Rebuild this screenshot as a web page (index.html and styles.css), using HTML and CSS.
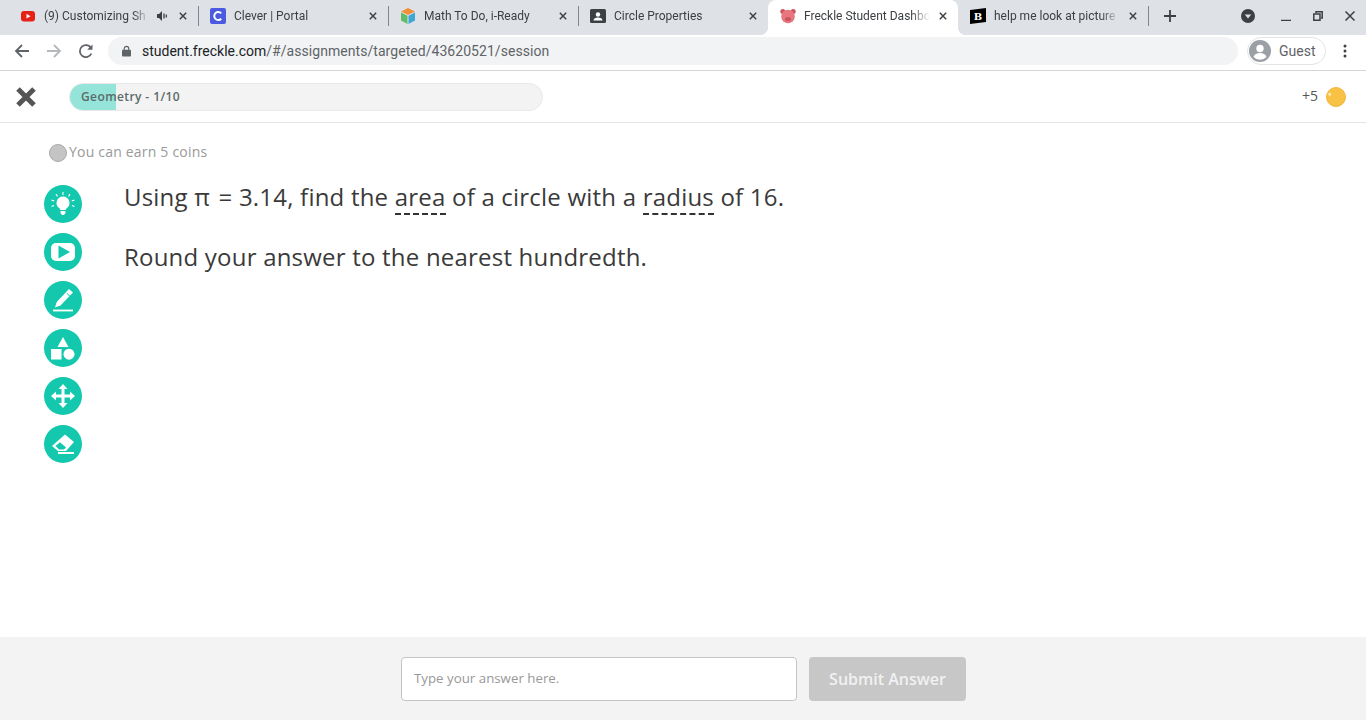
FILE: index.html
```html
<!DOCTYPE html>
<html lang="en">
<head>
    <meta charset="UTF-8">
    <meta name="viewport" content="width=device-width, initial-scale=1.0">
    <title>Freckle Student Dashboard</title>
    <link rel="stylesheet" href="styles.css">
</head>
<body>
    <!-- Browser tabs -->
    <div class="tabstrip">
        <div class="tab sep">
            <svg class="favicon" viewBox="0 0 16 16"><rect x="1" y="3" width="14" height="10.5" rx="3" fill="#e62117"/><path d="M6.5 5.800v4.800l4-2.400z" fill="#fff"/></svg>
            <span class="tab-title">(9) Customizing Sh</span>
            <svg class="audio" viewBox="0 0 10 12"><path d="M0 4h2l3-3v10L2 8H0z" fill="#3c4043"/><path d="M7 3.500v5M9.300 4.500v3" stroke="#3c4043" stroke-width="1.300"/></svg>
            <svg class="tab-close" viewBox="0 0 10 10"><path d="M1 1l8 8M9 1l-8 8"/></svg>
        </div>
        <div class="tab sep">
            <svg class="favicon" viewBox="0 0 16 16"><rect width="16" height="16" rx="2" fill="#4a5be0"/><path d="M11.200 5.300a4 4 0 1 0 0 5.400" fill="none" stroke="#fff" stroke-width="2"/></svg>
            <span class="tab-title">Clever | Portal</span>
            <svg class="tab-close" viewBox="0 0 10 10"><path d="M1 1l8 8M9 1l-8 8"/></svg>
        </div>
        <div class="tab sep">
            <svg class="favicon" viewBox="0 0 16 16"><path d="M8 0l7 3.500L8 7 1 3.500z" fill="#f0913a"/><path d="M1 4.500l6.500 3.300V16L1 12.500z" fill="#62bb6a"/><path d="M15 4.500L8.500 7.800V16l6.500-3.500z" fill="#3fa7d6"/></svg>
            <span class="tab-title">Math To Do, i-Ready</span>
            <svg class="tab-close" viewBox="0 0 10 10"><path d="M1 1l8 8M9 1l-8 8"/></svg>
        </div>
        <div class="tab">
            <svg class="favicon" viewBox="0 0 16 16"><rect y="1" width="16" height="14" rx="1.500" fill="#3c4043"/><circle cx="8" cy="6.500" r="2.200" fill="#fff"/><path d="M3.500 12.500c0-2 2-3 4.500-3s4.500 1 4.500 3z" fill="#fff"/></svg>
            <span class="tab-title">Circle Properties</span>
            <svg class="tab-close" viewBox="0 0 10 10"><path d="M1 1l8 8M9 1l-8 8"/></svg>
        </div>
        <div class="tab active">
            <svg class="favicon" viewBox="0 0 16 16"><circle cx="2.800" cy="3.500" r="2.500" fill="#c9555f"/><circle cx="13.200" cy="3.500" r="2.500" fill="#c9555f"/><circle cx="8" cy="8.500" r="6.800" fill="#e9767f"/><ellipse cx="8" cy="11" rx="3" ry="2" fill="#c9555f"/></svg>
            <span class="tab-title">Freckle Student Dashbo</span>
            <svg class="tab-close" viewBox="0 0 10 10"><path d="M1 1l8 8M9 1l-8 8"/></svg>
        </div>
        <div class="tab sep">
            <svg class="favicon" viewBox="0 0 16 16"><path d="M0 2l16-2v14L0 16z" fill="#000"/><text x="8" y="12" class="brainly">B</text></svg>
            <span class="tab-title">help me look at picture</span>
            <svg class="tab-close" viewBox="0 0 10 10"><path d="M1 1l8 8M9 1l-8 8"/></svg>
        </div>
        <svg class="new-tab" viewBox="0 0 12 12"><path d="M6 0v12M0 6h12"/></svg>
        <div class="window-btns">
            <svg class="tab-search" viewBox="0 0 14 14"><circle cx="7" cy="7" r="7" fill="#3c4043"/><path d="M3.800 5.500h6.400L7 9.500z" fill="#dee1e6"/></svg>
            <svg class="win-btn" viewBox="0 0 10 10"><path d="M0 9.500h10" stroke-width="1.500"/></svg>
            <svg class="win-btn" viewBox="0 0 10 10"><path d="M3 2V.8h6.200V7H8M.8 3h6.200v6.200H.8z" stroke-width="1.500"/></svg>
            <svg class="win-btn" viewBox="0 0 10 10"><path d="M.5.500l9 9M9.500.500l-9 9" stroke-width="1.500"/></svg>
        </div>
    </div>

    <!-- Address bar -->
    <div class="toolbar">
        <svg class="nav-icon" viewBox="0 0 16 16"><path d="M15 8H2M8 2L2 8l6 6" fill="none" stroke="#5f6368" stroke-width="1.800"/></svg>
        <svg class="nav-icon" viewBox="0 0 16 16"><path d="M1 8h13M8 2l6 6-6 6" fill="none" stroke="#b5b8bc" stroke-width="1.800"/></svg>
        <svg class="nav-icon" viewBox="0 0 16 16"><path d="M13.400 10.500a6 6 0 1 1-.3-5.300" fill="none" stroke="#5f6368" stroke-width="1.800"/><path d="M14.500 1.500v5.300H9.200z" fill="#5f6368"/></svg>
        <div class="omnibox">
            <svg class="lock" viewBox="0 0 10 12"><path d="M2.500 5V3.300a2.500 2.500 0 0 1 5 0V5" fill="none" stroke="#5f6368" stroke-width="1.300"/><rect y="4.500" width="10" height="7.500" rx="1" fill="#5f6368"/></svg>
            <span class="url"><span class="host">student.freckle.com</span>/#/assignments/targeted/43620521/session</span>
        </div>
        <div class="guest-chip">
            <svg class="guest-icon" viewBox="0 0 22 22"><circle cx="11" cy="11" r="11" fill="#9aa0a6"/><circle cx="11" cy="8.500" r="3.700" fill="#fff"/><path d="M4.500 17c1-3 3.500-4 6.500-4s5.500 1 6.500 4a9 9 0 0 1-13 0z" fill="#fff"/></svg>
            <span>Guest</span>
        </div>
        <svg class="kebab" viewBox="0 0 4 14"><circle cx="2" cy="2" r="1.500"/><circle cx="2" cy="7" r="1.500"/><circle cx="2" cy="12" r="1.500"/></svg>
    </div>

    <!-- App header -->
    <header class="app-header">
        <svg class="exit" viewBox="0 0 22 22"><path d="M3 3l16 16M19 3L3 19" fill="none" stroke="#555" stroke-width="5"/></svg>
        <div class="progress">
            <div class="progress-fill"></div>
            <span class="progress-label">Geometry - 1/10</span>
        </div>
        <div class="coins">
            <span class="coin-count">+5</span>
            <span class="coin"></span>
        </div>
    </header>

    <main class="content">
        <div class="earn">
            <span class="earn-coin"></span>
            <span class="earn-text">You can earn 5 coins</span>
        </div>
        <div class="question-row">
            <div class="tools">
                <button class="tool">
                    <svg viewBox="0 0 24 24"><path d="M12 4.500a6.500 6.500 0 0 1 3.700 11.800c-.7.5-1 1-1 1.700H9.300c0-.7-.3-1.200-1-1.700A6.500 6.500 0 0 1 12 4.500zM9.500 19h5v2l-1.500 2h-2l-1.500-2z" fill="#fff"/><path d="M12 0v3M5 2l1.500 2.500M19 2l-1.500 2.500M.5 8l2.700 1M23.500 8l-2.700 1M.5 14.500l2.500-1M23.500 14.500l-2.500-1" stroke="#fff" stroke-width="1.100"/></svg>
                </button>
                <button class="tool">
                    <svg viewBox="0 0 24 24"><rect y="3" width="24" height="18" rx="5" fill="#fff"/><path d="M7.500 5.500v13L19 12z" fill="#14c8ae"/></svg>
                </button>
                <button class="tool">
                    <svg viewBox="0 0 24 24"><path d="M18 1l4 3.500L9.500 17.500 4 19.500l1.700-5.500z" fill="#fff"/><path d="M16 5.500l3.500 3.200" stroke="#14c8ae" stroke-width="1"/><path d="M2 22.500h20" stroke="#fff" stroke-width="1.800"/></svg>
                </button>
                <button class="tool">
                    <svg viewBox="0 0 24 24"><path d="M12 1l5.500 10h-11z" fill="#fff"/><rect x="0" y="13" width="10.500" height="10.500" fill="#fff"/><circle cx="18" cy="18.200" r="5.500" fill="#fff"/></svg>
                </button>
                <button class="tool">
                    <svg viewBox="0 0 24 24"><path d="M12 0l4.500 5h-3v5.500H19v-3l5 4.500-5 4.500v-3h-5.500V19h3L12 24l-4.500-5h3v-5.500H5v3L0 12l5-4.500v3h5.500V5h-3z" fill="#fff"/></svg>
                </button>
                <button class="tool">
                    <svg viewBox="0 0 24 24"><path d="M14 2.500L23 10 15 19H7L1 14z" fill="#fff"/><path d="M4.500 14L9 10.200l6 5.300-2 2H8z" fill="#14c8ae"/><path d="M7 21h16" stroke="#fff" stroke-width="2"/></svg>
                </button>
            </div>
            <div class="question">
                <p>Using <span class="pi">π</span> = 3.14, find the <span class="term">area</span> of a circle with a <span class="term">radius</span> of 16.</p>
                <p>Round your answer to the nearest hundredth.</p>
            </div>
        </div>
    </main>

    <footer class="answer-bar">
        <input class="answer-input" type="text" placeholder="Type your answer here.">
        <button class="submit-btn">Submit Answer</button>
    </footer>
</body>
</html>
```

FILE: styles.css
```css
* {
    box-sizing: border-box;
}
body {
    margin: 0;
    height: 720px;
    overflow: hidden;
    display: flex;
    flex-direction: column;
    font-family: "Open Sans", sans-serif;
    background-color: #fff;
}
svg {
    display: block;
    flex: none;
}

/* browser chrome */
.tabstrip {
    height: 35px;
    flex: none;
    display: flex;
    align-items: stretch;
    padding-left: 8px;
    background-color: #dee1e6;
}
.tab {
    position: relative;
    width: 190px;
    flex: none;
    display: flex;
    align-items: center;
    padding: 0 11px 4px 12px;
    font-family: Roboto, sans-serif;
    font-size: 12px;
    color: #3c4043;
}
.tab.sep::after {
    content: "";
    position: absolute;
    right: -1px;
    top: 6px;
    height: 20px;
    width: 1px;
    background-color: #80868b;
}
.tab.active {
    background-color: #fff;
    border-radius: 8px 8px 0 0;
}
.tab.active::before,
.tab.active::after {
    content: "";
    position: absolute;
    bottom: 0;
    width: 8px;
    height: 8px;
}
.tab.active::before {
    left: -8px;
    background: radial-gradient(circle at 0 0, transparent 8px, #fff 8px);
}
.tab.active::after {
    right: -8px;
    background: radial-gradient(circle at 100% 0, transparent 8px, #fff 8px);
}
.favicon {
    width: 16px;
    height: 16px;
    margin-right: 8px;
}
.brainly {
    font-family: "DejaVu Serif", serif;
    font-size: 10px;
    font-weight: bold;
    text-anchor: middle;
    fill: #fff;
}
.tab-title {
    flex: 1;
    min-width: 0;
    overflow: hidden;
    white-space: nowrap;
    -webkit-mask-image: linear-gradient(to right, #000 85%, transparent 100%);
    mask-image: linear-gradient(to right, #000 85%, transparent 100%);
}
.audio {
    width: 10px;
    height: 12px;
    margin: 0 3px 0 8px;
}
.tab-close {
    width: 8px;
    height: 8px;
    margin-left: 9px;
    fill: none;
    stroke: #3c4043;
    stroke-width: 1.800;
}
.new-tab {
    width: 12px;
    height: 12px;
    margin: 10px 0 0 16px;
    fill: none;
    stroke: #3c4043;
    stroke-width: 1.800;
}
.window-btns {
    margin-left: auto;
    display: flex;
    align-items: center;
    padding: 0 11px 4px 0;
}
.tab-search {
    width: 14px;
    height: 14px;
    margin-right: 26px;
}
.win-btn {
    width: 10px;
    height: 10px;
    margin-left: 22px;
    fill: none;
    stroke: #3c4043;
}
.win-btn:nth-child(2) {
    margin-left: 0;
}
.toolbar {
    height: 36px;
    flex: none;
    display: flex;
    align-items: center;
    padding: 0 19px 3px 14px;
    background-color: #fff;
    border-bottom: 1px solid #d4d5d7;
}
.nav-icon {
    width: 16px;
    height: 16px;
    margin-right: 16px;
}
.omnibox {
    width: 1130px;
    height: 28px;
    margin-left: -2px;
    display: flex;
    align-items: center;
    padding-left: 14px;
    border-radius: 14px;
    background-color: #f1f3f4;
    font-family: Roboto, sans-serif;
    font-size: 14px;
    letter-spacing: .05px;
    color: #5f6368;
}
.lock {
    width: 9px;
    height: 12px;
    margin-right: 11px;
}
.host {
    letter-spacing: 0;
    color: #202124;
}
.guest-chip {
    width: 79px;
    height: 28px;
    margin-left: 9px;
    display: flex;
    align-items: center;
    gap: 8px;
    padding-left: 1px;
    border: 1px solid #e3e4e6;
    border-radius: 14px;
    font-family: Roboto, sans-serif;
    font-size: 14px;
    color: #5f6368;
}
.guest-icon {
    width: 22px;
    height: 22px;
}
.kebab {
    width: 4px;
    height: 14px;
    margin-left: 17px;
    fill: #3c4043;
}

/* app */
.app-header {
    height: 52px;
    flex: none;
    display: flex;
    align-items: center;
    padding: 0 20px 0 15px;
    border-bottom: 1px solid #e4e4e4;
}
.exit {
    width: 22px;
    height: 22px;
}
.progress {
    position: relative;
    width: 474px;
    height: 28px;
    margin-left: 32px;
    overflow: hidden;
    border: 1px solid #e8e8e8;
    border-radius: 14px;
    background-color: #f3f3f3;
}
.progress-fill {
    width: 46px;
    height: 100%;
    background-color: #94e4d9;
}
.progress-label {
    position: absolute;
    left: 11px;
    top: 4px;
    font-size: 12px;
    font-weight: 600;
    line-height: 17px;
    letter-spacing: .4px;
    color: #5c6b6a;
}
.coins {
    margin-left: auto;
    display: flex;
    align-items: center;
    gap: 8px;
    font-size: 14px;
    color: #555;
}
.coin-count {
    margin-bottom: 2px;
}
.coin {
    width: 20px;
    height: 20px;
    border: 1px solid #f4b73c;
    border-radius: 50%;
    background: radial-gradient(circle at 15% 35%, #ffe9b0 1px, transparent 2px), #f8c244;
}
.content {
    flex: 1;
    padding: 20px 0 0 44px;
}
.earn {
    display: flex;
    align-items: center;
    margin-left: 5px;
    height: 20px;
    font-size: 14px;
    letter-spacing: .2px;
    color: #999;
}
.earn-coin {
    width: 18px;
    height: 18px;
    margin-right: 2px;
    border: 1px solid #aaa;
    border-radius: 50%;
    background-color: #c4c4c4;
}
.earn-text {
    margin-bottom: 4px;
}
.question-row {
    display: flex;
    margin-top: 22px;
}
.tools {
    width: 38px;
    flex: none;
    display: flex;
    flex-direction: column;
    gap: 10px;
}
.tool {
    width: 38px;
    height: 38px;
    padding: 7px;
    border: none;
    border-radius: 50%;
    background-color: #14c8ae;
}
.tool svg {
    width: 24px;
    height: 24px;
}
.question {
    margin-left: 42px;
    font-size: 24px;
    letter-spacing: .21px;
    color: #3a3a3a;
}
.question p {
    margin: 0 0 36px;
    line-height: 24px;
}
.pi {
    margin-right: 2px;
}
.term {
    border-bottom: 2px dashed #333;
}
.answer-bar {
    height: 83px;
    flex: none;
    display: flex;
    justify-content: center;
    gap: 12px;
    padding: 20px 0 0 1px;
    background-color: #f3f3f3;
}
.answer-input {
    width: 396px;
    height: 44px;
    padding: 0 12px 2px;
    border: 1px solid #c4c4c4;
    border-radius: 4px;
    font-family: "Open Sans", sans-serif;
    font-size: 13.3px;
    background-color: #fff;
}
.answer-input::placeholder {
    color: #999;
}
.submit-btn {
    width: 157px;
    height: 44px;
    border: none;
    border-radius: 4px;
    background-color: #c7c7c7;
    font-family: "Open Sans", sans-serif;
    font-size: 16px;
    font-weight: 600;
    color: #f1f1f1;
}
```
